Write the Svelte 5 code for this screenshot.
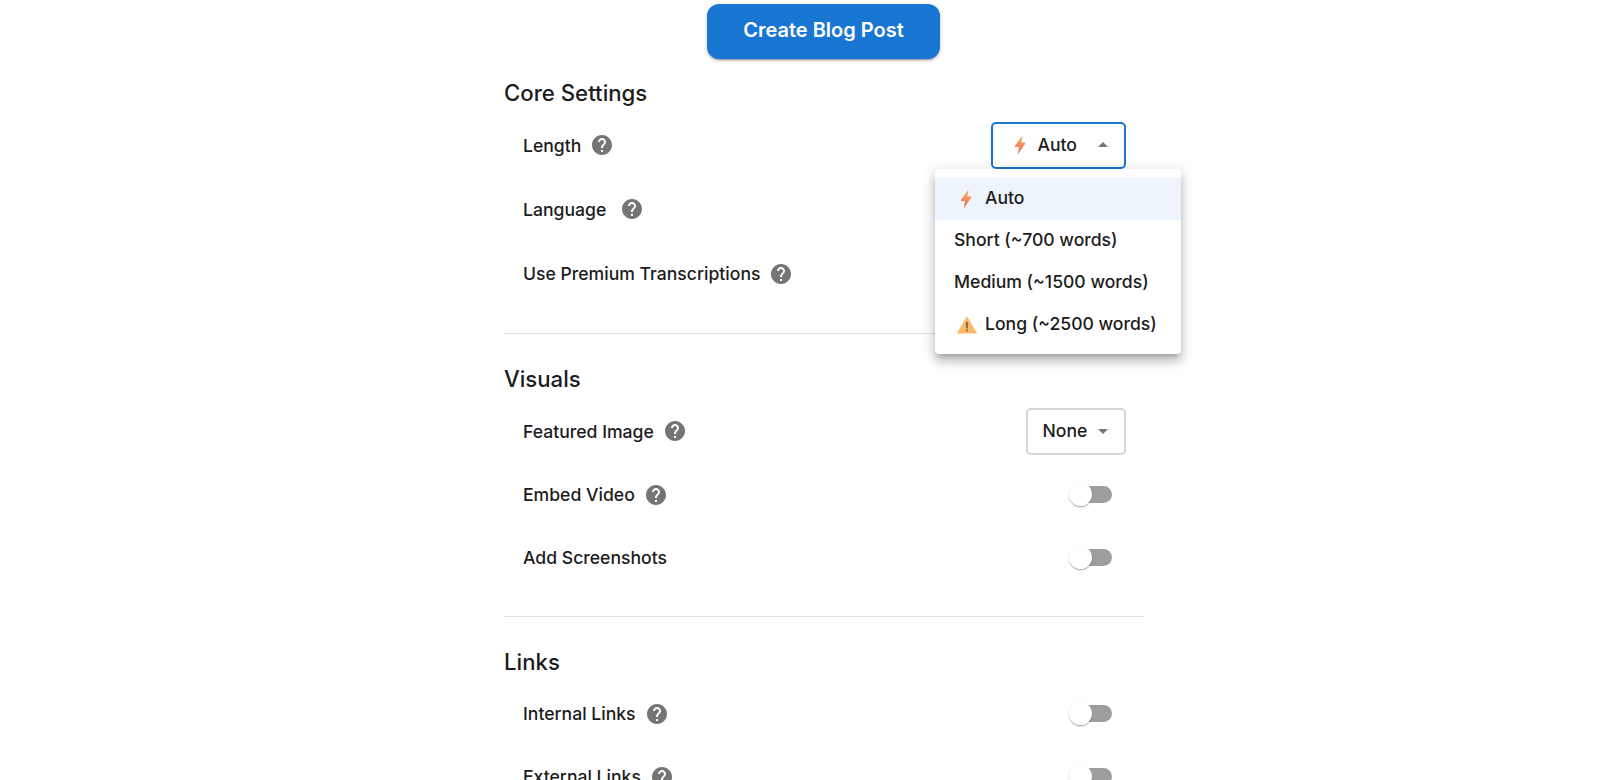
<script>
  const help = "M12 2C6.48 2 2 6.48 2 12s4.48 10 10 10 10-4.48 10-10S17.52 2 12 2zm1 17h-2v-2h2v2zm2.07-7.75l-.9.92C13.45 12.9 13 13.5 13 15h-2v-.5c0-1.1.45-2.1 1.17-2.83l1.24-1.26c.37-.36.59-.86.59-1.41 0-1.1-.9-2-2-2s-2 .9-2 2H8c0-2.21 1.79-4 4-4s4 1.79 4 4c0 .88-.36 1.68-.93 2.25z";
  const sections = [
    { title: "Core Settings", rows: [
      { label: "Length", control: "open" },
      { label: "Language", wide: true, control: "none" },
      { label: "Use Premium Transcriptions", control: "switch", tall: true }
    ]},
    { title: "Visuals", rows: [
      { label: "Featured Image", control: "select" },
      { label: "Embed Video", control: "switch" },
      { label: "Add Screenshots", control: "switch", nohelp: true }
    ]},
    { title: "Links", rows: [
      { label: "Internal Links", control: "switch" },
      { label: "External Links", control: "switch" }
    ]}
  ];
</script>

{#snippet bolt(cls)}
  <svg class={cls} viewBox="0 0 12 20" width="12" height="20" aria-hidden="true">
    <defs>
      <linearGradient id="boltg" x1="0" y1="0" x2="0" y2="1">
        <stop offset="0" stop-color="#fbb25c" />
        <stop offset="1" stop-color="#f0655a" />
      </linearGradient>
    </defs>
    <path d="M8.5.5.8 11c-.3.5 0 1 .5 1H5L3.8 19.5 11.3 8.6c.3-.5 0-1-.5-1H7.3z" fill="url(#boltg)" />
  </svg>
{/snippet}

<div class="page">
  <div class="column">
    <div class="top"><button class="create"><span>Create Blog Post</span></button></div>
    {#each sections as s, i}
      {#if i > 0}<hr />{/if}
      <h2>{s.title}</h2>
      {#each s.rows as r}
        <div class="row" class:short={r.control === "switch" && !r.tall} class:tall={r.tall}>
          <div class="label" class:wide={r.wide}>
            <span>{r.label}</span>
            {#if !r.nohelp}
              <svg class="help" viewBox="0 0 24 24" width="24" height="24" aria-hidden="true"><path d={help} /></svg>
            {/if}
          </div>
          {#if r.control === "open"}
            <div class="select focus">
              {@render bolt("bolt")}
              <span class="val">Auto</span>
              <svg class="arrow" viewBox="0 0 24 24" width="24" height="24"><path d="M7 14l5-5 5 5z" /></svg>
            </div>
          {:else if r.control === "select"}
            <div class="select plain">
              <span class="val">None</span>
              <svg class="arrow" viewBox="0 0 24 24" width="24" height="24"><path d="M7 10l5 5 5-5z" /></svg>
            </div>
          {:else if r.control === "switch"}
            <div class="switch"><span class="thumb"></span></div>
          {/if}
        </div>
      {/each}
    {/each}
  </div>

  <div class="menu">
    <div class="item active">{@render bolt("ibolt")}<span>Auto</span></div>
    <div class="item"><span>Short (~700 words)</span></div>
    <div class="item"><span>Medium (~1500 words)</span></div>
    <div class="item">
      <svg class="warn" viewBox="0 0 20 18" width="20" height="18" aria-hidden="true">
        <path d="M10 1.2 19.2 17H.8z" fill="#fbb867" stroke="#fbb867" stroke-width="1.2" stroke-linejoin="round" />
        <rect x="9.2" y="6" width="1.6" height="6.4" fill="#6b5a48" />
        <rect x="9.2" y="13.6" width="1.6" height="1.7" fill="#6b5a48" />
      </svg>
      <span>Long (~2500 words)</span>
    </div>
  </div>
</div>

<style>
  :global(html), :global(body) {
    margin: 0;
    height: 780px;
    overflow: hidden;
    background: #fff;
  }
  .page {
    position: relative;
    height: 780px;
    overflow: hidden;
    font-family: Inter, "Liberation Sans", sans-serif;
    color: #1c1c1c;
  }
  .column {
    width: 640px;
    margin-left: 504px;
  }
  .top {
    display: flex;
    justify-content: center;
    padding: 4px 1px 0 0;
    margin-bottom: 19px;
  }
  .create {
    width: 233px;
    height: 55px;
    padding: 0 0 3px;
    border: 0;
    border-radius: 12px;
    background: #1976d2;
    color: #fff;
    font: 600 20px Inter, sans-serif;
    box-shadow: 0 3px 1px -2px rgba(0,0,0,.2), 0 2px 2px rgba(0,0,0,.14), 0 1px 5px rgba(0,0,0,.12);
  }
  h2 {
    margin: 0 0 5px;
    height: 30px;
    line-height: 30px;
    font-size: 22.2px;
    font-weight: 500;
  }
  hr {
    border: 0;
    border-top: 1px solid #e0e0e0;
    margin: 27px 0 30px;
  }
  .row {
    height: 64px;
    display: flex;
    align-items: center;
    justify-content: space-between;
    padding: 0 18.5px 0 19px;
  }
  .row.short { height: 63px; }
  .row.tall { height: 65px; }
  .label {
    display: flex;
    align-items: center;
    gap: 9px;
    font-size: 17.6px;
    font-weight: 500;
  }
  .label.wide { gap: 14px; }
  .help { fill: #757575; }
  .select {
    box-sizing: border-box;
    display: flex;
    align-items: center;
    height: 47px;
    border-radius: 5px;
    font-size: 17.6px;
    font-weight: 500;
    background: #fff;
  }
  .val { padding-bottom: 1px; }
  .focus {
    width: 135px;
    border: 2px solid #1976d2;
    padding-left: 21px;
  }
  .plain {
    width: 100px;
    border: 2px solid #d5d5d5;
    padding-left: 15px;
  }
  .bolt { margin-right: 12px; }
  .arrow {
    fill: #757575;
    margin-left: auto;
    margin-right: 9px;
  }
  .switch {
    position: relative;
    width: 42px;
    height: 17px;
    border-radius: 9px;
    background: #9e9e9e;
    margin-right: 14px;
  }
  .thumb {
    position: absolute;
    left: -1px;
    top: -3px;
    width: 23px;
    height: 23px;
    border-radius: 50%;
    background: #fff;
    box-shadow: 0 2px 1px -1px rgba(0,0,0,.2), 0 1px 1px rgba(0,0,0,.14), 0 1px 3px rgba(0,0,0,.12);
  }
  .menu {
    position: absolute;
    left: 935px;
    top: 169px;
    width: 246px;
    box-sizing: border-box;
    padding: 9px 0 8px;
    background: #fff;
    border-radius: 4px;
    box-shadow: 0 5px 5px -3px rgba(0,0,0,.2), 0 8px 10px 1px rgba(0,0,0,.14), 0 3px 14px 2px rgba(0,0,0,.12);
  }
  .item {
    display: flex;
    align-items: center;
    height: 42px;
    padding-left: 19px;
    font-size: 17.6px;
    font-weight: 500;
  }
  .item span { padding-bottom: 4px; }
  .active { background: #edf4fb; }
  .ibolt { margin: 0 13px 0 6px; }
  .warn { margin: 0 8px 0 3px; }
</style>
